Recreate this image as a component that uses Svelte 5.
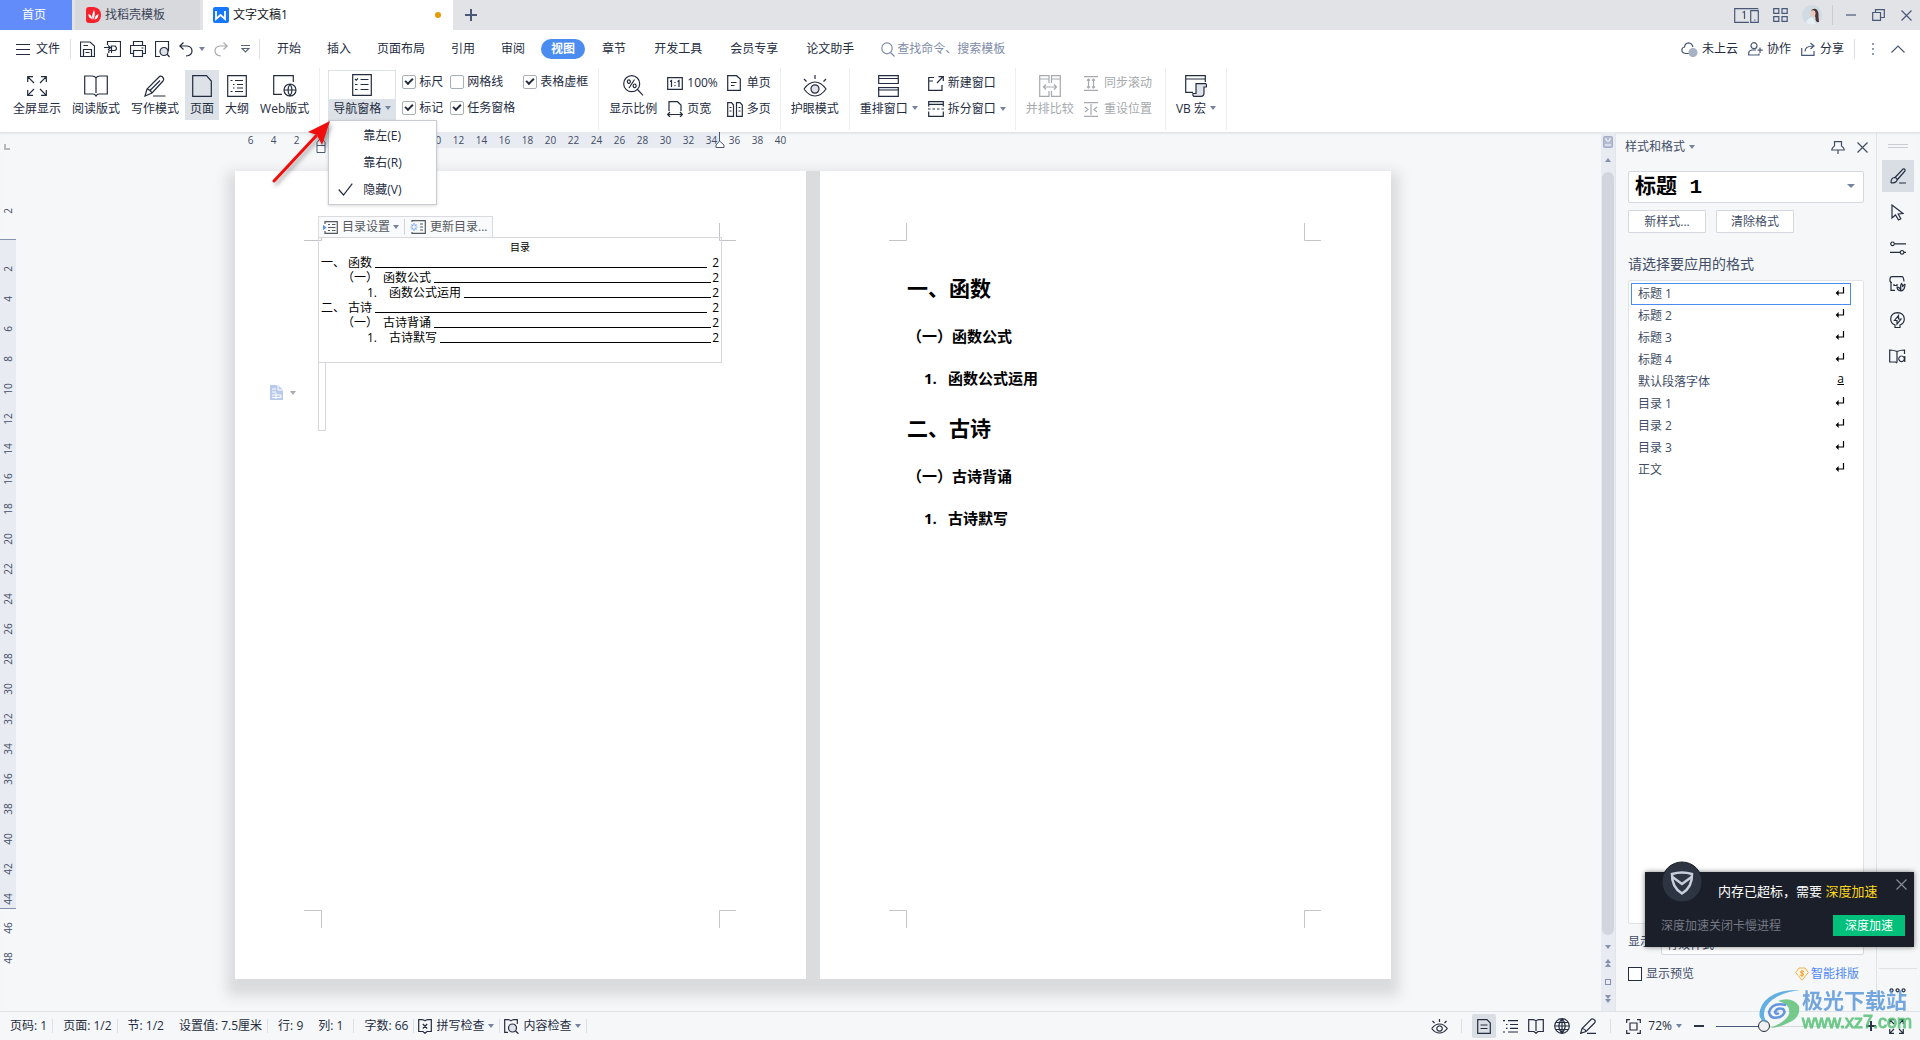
<script lang="ts">
  type Icon = { w: number; h: number; d: string; fill?: string; tone?: string };

  const icons: Record<string, Icon> = {
    burger: { w: 14, h: 12, d: 'M0 1.5H14M0 6.5H14M0 11.5H14' },
    save: { w: 15, h: 16, d: 'M.5 1H10L14.5 5V15.5H.5ZM3.5 15V8.5H11.5V15M3.5 4.5H8M5.5 11.5H9.5' },
    exportPdf: { w: 17, h: 16, d: 'M3.5 4V.5H16.5V15.5H3.5V12.5M0 6.5H6M4 4.5L6.5 6.5L4 9M7.5 12V5H11Q14 7.5 11 9.5H6Q4 10 5 12' },
    print: { w: 16, h: 16, d: 'M3.5 4.5V.5H12.5V4.5M3.5 12.5H.5V4.5H15.5V12.5H12.5M3.5 9.5H12.5V15.5H3.5ZM11.5 7H13.5' },
    preview: { w: 15, h: 17, d: 'M5 15.5H.5V.5H13.5V10M12 13L14.5 16', fill: 'M9 6.5A4 4 0 1 0 9 14.5A4 4 0 1 0 9 6.5Z' },
    undo: { w: 14, h: 15, d: 'M4.5 .5L.8 4L4.5 7.5M1 4H8Q13 4.5 13 9Q13 13.5 7 14' },
    redo: { w: 14, h: 15, d: 'M9.5 .5L13.2 4L9.5 7.5M13 4H6Q1 4.5 1 9Q1 13.5 7 14' },
    more: { w: 9, h: 8, d: 'M0 .5H9M1 3.5H8L4.5 7Z' },
    search: { w: 14, h: 15, d: 'M6 .8A5.2 5.5 0 1 0 6 11.8A5.2 5.5 0 1 0 6 .8M9.5 10.5L13.5 14.5' },
    cloud: { w: 17, h: 15, d: 'M8 11.5H4.5Q.8 11 .8 8Q1 5.5 3.5 5Q4 1 7.5 .8Q11 1 12 5', fill: 'M12 6.5A4 4 0 1 0 12 14.5A4 4 0 1 0 12 6.5', tone: '#a9b1c5' },
    people: { w: 15, h: 14, d: 'M6 .7A3 3 0 1 0 6 6.7A3 3 0 1 0 6 .7M8 8H4Q.7 8.5 .7 11V13H11V11.5M12 5.5V11M9.5 8.2H14.8' },
    share: { w: 15, h: 14, d: 'M.7 6V13.3H13V9M4 9.5Q4 4 12 4M9.5 1L13 4L9.5 7' },
    dots: { w: 4, h: 14, d: 'M2 1V3M2 6V8M2 11V13' },
    up: { w: 14, h: 8, d: 'M.5 7.5L7 1L13.5 7.5' },
    dual: { w: 25, h: 15, d: 'M15 14.3H.7V.7H24.3M16.7 2.7H24.3V14.3H16.7ZM20 12H21.5M8.5 4.5L10.5 3.5V11' },
    apps: { w: 15, h: 14, d: 'M.7.7H5.8V5.3H.7ZM9 .7H14.2V5.3H9ZM.7 8.7H5.8V13.3H.7ZM9 8.7H14.2V13.3H9Z' },
    minimize: { w: 10, h: 12, d: 'M0 6H10' },
    restore: { w: 13, h: 12, d: 'M.7 3.5H8.5V11.3H.7ZM3.5 3V.7H12.3V8.5H9' },
    close: { w: 11, h: 11, d: 'M.5.5L10.5 10.5M10.5.5L.5 10.5' },
    fullscreen: { w: 20, h: 20, d: 'M.7 6V.7H6M.7.7L7 7M14 .7H19.3V6M19.3.7L13 7M.7 14V19.3H6M.7 19.3L7 13M19.3 14V19.3H14M19.3 19.3L13 13' },
    book: { w: 24, h: 22, d: 'M12 3V18M12 3Q11 1 8 1H.7V19H9Q11 19 12 21Q13 19 15 19H23.3V1H16Q13 1 12 3' },
    pen: { w: 22, h: 22, d: 'M9 21H21.5M1 21L3 14L15 2Q16.5.2 18.5 2Q20.5 4 19 6L8 18ZM3 14Q6.5 14.5 8 18M5.5 16L16 5.5' },
    page: { w: 20, h: 22, d: 'M.7.7H14.5L19.3 6V21.3H.7Z' },
    outline: { w: 20, h: 22, d: 'M.7.7H19.3V21.3H.7ZM3.5 5.5H5.5M3.5 16.5H5.5M8 5.5H16M10 9.5H16M6 9.5H7.5M10 13H16M6 13H7.5M8 16.5H16' },
    web: { w: 24, h: 22, d: 'M9 19.3H.7V.7H20.3V7M17 9A6 6 0 1 0 17 21A6 6 0 1 0 17 9Q13 15 17 21Q21 15 17 9M11 15H23' },
    nav: { w: 20, h: 22, d: 'M.7.7H19.3V21.3H.7ZM3 5L4.2 6.2L6 4.5M8.5 5.5H16.5M3 10.5H5.5M8.5 10.5H16.5M3 15.5H5.5M8.5 15.5H16.5' },
    zoom: { w: 21, h: 21, d: 'M8.7.7A8 8 0 1 0 8.7 16.7A8 8 0 1 0 8.7.7M14.5 14.5L20 20.3M11.5 4.5L6 13M5.8 4.8A1.5 1.8 0 1 0 5.9 4.8M11.6 9A1.5 1.8 0 1 0 11.7 9' },
    oneToOne: { w: 16, h: 13, d: 'M.7.7H15.3V12.3H.7ZM3 4.5L4.5 3.5V10M10.5 4.5L12 3.5V10M8 5V6M8 8V9' },
    pageWidth: { w: 16, h: 16, d: 'M2 10V.7H10.5L14 4V10M.7 13.5H15.3M3 11L.7 13.5L3 16M13 11L15.3 13.5L13 16' },
    single: { w: 14, h: 16, d: 'M.7.7H9.5L13.3 4V15.3H.7ZM4 7.5H9.5M4 10.5H7.5' },
    multi: { w: 16, h: 15, d: 'M.7.7H4.5L6.5 3V14.3H.7ZM9.5.7H13L15.3 3V14.3H9.5ZM2.5 5.5H4.5M2.5 9H4.5M11.5 5.5H13.5M11.5 9H13.5' },
    eyeCare: { w: 24, h: 22, d: 'M1 14Q6 7 12 7Q18 7 23 14Q18 21 12 21Q6 21 1 14M12 0V4M1 4L3.5 6.5M23 4L20.5 6.5', fill: 'M12 9.8A4 4.2 0 1 0 12 18.2A4 4.2 0 1 0 12 9.8Z' },
    arrange: { w: 21, h: 22, d: 'M.7.7H20.3V8.5H.7ZM.7 3.5H20.3M.7 12.5H20.3V21.3H.7Z', fill: 'M.7 12.5H20.3V15H.7Z' },
    newWindow: { w: 16, h: 15, d: 'M6 1.5H.7V14.3H14V9M.7 5H5M9 7L15 .7M10.5.7H15.3V5' },
    split: { w: 16, h: 16, d: 'M.7 5.5V.7H15.3V5.5M.7 3.3H15.3M.7 10.5V15.3H15.3V10.5M0 8H2.5M4.5 8H7M9 8H11.5M13.5 8H16' },
    compare: { w: 22, h: 22, d: 'M10 8V.7H.7V21.3H10V16M12.5 8V.7H21.3V21.3H12.5V16M.7 4H10M12.5 4H21.3M5 12H17M7 9.5L4.5 12L7 14.5M15 9.5L17.5 12L15 14.5' },
    syncScroll: { w: 14, h: 15, d: 'M0 .7H14M0 14.3H14M4.5 3V12M9.5 3V12M3 4.5L4.5 3L6 4.5M3 10.5L4.5 12L6 10.5M8 4.5L9.5 3L11 4.5M8 10.5L9.5 12L11 10.5' },
    resetPos: { w: 14, h: 15, d: 'M0 .7H14M0 14.3H14M7 2V13M1 5L4 7.5L1 10M13 5L10 7.5L13 10' },
    macro: { w: 22, h: 22, d: 'M8 17.3H.7V.7H20.3V7M.7 4H20.3', fill: 'M11 8.7H20.5Q22 9 21.3 12H19V18Q19 21.3 16 21.3H9Q7.5 21 8 18.5H11Z' },
    tocSet: { w: 15, h: 13, d: 'M2 3V.7H14.3V12.3H2V10M5 3.5H7M9 3.5H12.5M5 6.5H12.5M5 9.5H7M9 9.5H12.5', fill: 'M.5 5L2.5 6.5L.5 8Z', tone: '#5b8def' },
    tocUpdate: { w: 16, h: 14, d: 'M2 2V.7H15.3V13.3H2V12M10 4H13M10 7H13M10 10H13', fill: 'M4 3V5.5M4 8.5V11M.5 7H2.5M5.5 7H7.5M1.5 4.5L2.8 5.8M5.2 8.2L6.5 9.5M6.5 4.5L5.2 5.8M2.8 8.2L1.5 9.5', tone: '#7aa5f3' },
    pin: { w: 14, h: 13, d: 'M3.5.7H10.5V5Q13 6.5 13.3 9H.7Q1 6.5 3.5 5ZM7 9V13' },
    enter: { w: 10, h: 9, d: 'M8.500 0V6H1M3 4.500L1.500 6L3 7.500Z' },
    brush: { w: 16, h: 16, d: 'M1 15Q1 9.5 4.5 9.5Q7.5 9.8 7 12.5Q6 15 1 15M5 9.5L13 1Q15.5.5 15 3L7.5 11.5M9 15H16' },
    cursor: { w: 13, h: 17, d: 'M1 1V14L4.5 11L7.5 16L9.8 14.8L7.2 10L12 9.5Z' },
    sliders: { w: 16, h: 14, d: 'M2.5 1A1.8 1.8 0 1 0 2.6 1M5 2.8H16M12 9.5A1.8 1.8 0 1 0 12.1 9.5M0 11.3H10M14 11.3H16' },
    shop: { w: 17, h: 16, d: 'M2 7V14.3H6M15 5.5Q14.5.7 13 .7H3Q1 .7 1 3Q.5 6.5 3 6.5M5 8V9.500H8V8', fill: 'M16 8Q16 14.5 12 15Q8 14.5 8 11Q11 11 12 15Q11 9.5 12.500 7.500Q14 9 13.500 11Q14.500 8.500 16 8' },
    bulb: { w: 15, h: 17, d: 'M5 13Q.7 11.5.7 7Q1 1 7.5.7Q14 1 14.3 7Q14.3 11.5 10 13V15.5H5ZM8.5 3.5L4.5 8.5H7V12L11 7H8.5Z' },
    lookup: { w: 17, h: 15, d: 'M8 2.500V13.500M8 2.500Q5 1 .7 1V13H6.500L8 14M8 2.500Q11 1 15.5 1V5M12.5 7A2.8 2.8 0 1 0 12.6 7M15.800 7V13' },
    spell: { w: 14, h: 15, d: 'M7 2Q6 .7 4 .7H.7V12.5H5L7 14.3L9 12.5H13.3V.7H10Q8 .7 7 2M4.8 5L9.2 9.5M9.2 5L4.8 9.5' },
    content: { w: 15, h: 15, d: 'M7 2Q6 .7 4 .7H.7V13.3H4M7 2Q8 .7 10 .7H13.3V5M11.5 12L14.5 14.8', fill: 'M8.5 5A4 4 0 1 0 8.5 13A4 4 0 1 0 8.5 5Z' },
    eye: { w: 17, h: 15, d: 'M.7 9.5Q4 5 8.5 5Q13 5 16.3 9.5Q13 14 8.5 14Q4 14 .7 9.5M8.5 6.8A2.7 2.7 0 1 0 8.6 6.8M8.5 0V3M1.5 2L3.5 4M15.5 2L13.5 4' },
    doc: { w: 14, h: 15, d: 'M.7.7H10L13.3 4V14.3H.7ZM3.5 6H10.5M3.5 9.5H10.5' },
    lines: { w: 15, h: 13, d: 'M0 .7H2M5 .7H15M3 4.5H4.5M7 4.5H15M3 8.3H4.5M7 8.3H15M0 12H2M5 12H15' },
    smallBook: { w: 16, h: 15, d: 'M8 2V12M8 2Q7 .7 5 .7H.7V12.5H6L8 14.3L10 12.5H15.3V.7H11Q9 .7 8 2' },
    globe: { w: 16, h: 16, d: 'M8 .7A7.3 7.3 0 1 0 8 15.3A7.3 7.3 0 1 0 8 .7Q1.5 8 8 15.3Q14.5 8 8 .7M.7 8H15.3M8 .7V15.3M2 4.5H14M2 11.5H14' },
    smallPen: { w: 17, h: 16, d: 'M7 15.3H16M.7 15.3L2 10.5L11.5 1Q13 .2 15 2.5Q15.5 4 14.5 5L6 13.5ZM2 10.5Q5.5 11 6 13.5' },
    fit: { w: 15, h: 15, d: 'M.7 4V.7H4M11 .7H14.3V4M14.3 11V14.3H11M4 14.3H.7V11M4 4H11V11H4Z' },
    expand: { w: 15, h: 15, d: 'M.7 5V.7H5M.7.7L5 5M10 .7H14.3V5M14.3.7L10 5M.7 10V14.3H5M.7 14.3L5 10M14.3 10V14.3H10M14.3 14.3L10 10' },
    moreDots: { w: 17, h: 5, d: 'M2.5.8A1.5 1.5 0 1 0 2.6.8M8.5.8A1.5 1.5 0 1 0 8.6.8M14.5.8A1.5 1.5 0 1 0 14.6.8' },
    tick: { w: 15, h: 13, d: 'M.7 6.5L5.5 12L14.3.7' }
  };

  const menuTabs = ['开始', '插入', '页面布局', '引用', '审阅', '视图', '章节', '开发工具', '会员专享', '论文助手'];

  const views = [
    { icon: 'fullscreen', label: '全屏显示' },
    { icon: 'book', label: '阅读版式' },
    { icon: 'pen', label: '写作模式' },
    { icon: 'page', label: '页面', active: true },
    { icon: 'outline', label: '大纲' },
    { icon: 'web', label: 'Web版式' }
  ];

  let shows = $state([
    { label: '标尺', on: true },
    { label: '网格线', on: false },
    { label: '表格虚框', on: true },
    { label: '标记', on: true },
    { label: '任务窗格', on: true }
  ]);

  let navPosition = $state('隐藏(V)');
  const navOptions = ['靠左(E)', '靠右(R)', '隐藏(V)'];

  const evens = (from: number, to: number) =>
    Array.from({ length: (to - from) / 2 + 1 }, (_, i) => from + i * 2);

  const toc = [
    { level: 1, mark: '一、', text: '函数' },
    { level: 2, mark: '（一）', text: '函数公式' },
    { level: 3, mark: '1.', text: '函数公式运用' },
    { level: 1, mark: '二、', text: '古诗' },
    { level: 2, mark: '（一）', text: '古诗背诵' },
    { level: 3, mark: '1.', text: '古诗默写' }
  ];

  const styles = ['标题 1', '标题 2', '标题 3', '标题 4', '默认段落字体', '目录 1', '目录 2', '目录 3', '正文'];
  let currentStyle = $state('标题 1');

  const tools = ['brush', 'cursor', 'sliders', 'shop', 'bulb', 'lookup'];

  let zoom = $state(33);
  let previewOn = $state(false);
</script>

{#snippet icon(name: string)}
  {@const i = icons[name]}
  <svg class="icon" width={i.w} height={i.h} viewBox="0 0 {i.w} {i.h}" aria-hidden="true">
    <path d={i.d} />
    {#if i.fill}
      <path d={i.fill} fill={i.tone ?? '#dfe3e9'} stroke={i.tone ?? 'currentColor'} />
    {/if}
  </svg>
{/snippet}

{#snippet cropMarks()}
  <svg class="crop" width="571" height="808" viewBox="0 0 571 808" aria-hidden="true">
    <path d="M69 69.5H86.5V52M501 69.5H484.5V52M69 739.5H86.5V757M501 739.5H484.5V757" />
  </svg>
{/snippet}

<div class="app">
  <header class="titlebar">
    <button class="home">首页</button>
    <button class="tab template">
      <svg width="15" height="16" viewBox="0 0 15 16" aria-hidden="true">
        <path d="M0 3Q0 0 3 0H8Q15 1 15 8Q15 15 8 16H3Q0 16 0 13Z" fill="#f5222d" />
        <path d="M7 13Q5 9 8 3Q10 7 7 13M6 12Q2 11 2.5 7Q6 8 6 12M8.5 12.5Q8.5 8.5 12.5 7Q12.5 12 8.5 12.5" fill="#fff" />
      </svg>
      找稻壳模板
    </button>
    <button class="tab current">
      <svg width="16" height="16" viewBox="0 0 16 16" aria-hidden="true">
        <rect width="16" height="16" rx="2" fill="#1677ff" />
        <path d="M3 4V12L7.5 8L12 12V4" fill="none" stroke="#fff" stroke-width="1.8" />
      </svg>
      文字文稿1
      <span class="unsaved"></span>
    </button>
    <button class="add" aria-label="新建">
      <svg width="14" height="14" viewBox="0 0 14 14" aria-hidden="true"><path d="M7 1V13M1 7H13" stroke="#4a5878" stroke-width="2" /></svg>
    </button>
    <div class="window-tools">
      <button aria-label="双屏">{@render icon('dual')}</button>
      <button aria-label="应用">{@render icon('apps')}</button>
      <button aria-label="账号">
        <svg width="20" height="20" viewBox="0 0 20 20" aria-hidden="true">
          <circle cx="10" cy="10" r="10" fill="#cfdbe1" />
          <path d="M9 7Q10 3 14 4Q17 6 16.5 12L17 17Q13 18 13.5 12Z" fill="#4b3436" />
          <ellipse cx="11" cy="8.5" rx="2.5" ry="3.2" fill="#e9c9bd" />
          <path d="M4 18Q6 12 11 12.5L14 19Q9 21 4 18" fill="#e6f0f4" />
        </svg>
      </button>
      <span class="rule"></span>
      <button aria-label="最小化">{@render icon('minimize')}</button>
      <button aria-label="还原">{@render icon('restore')}</button>
      <button aria-label="关闭">{@render icon('close')}</button>
    </div>
  </header>

  <nav class="menubar">
    <button class="file">{@render icon('burger')}文件</button>
    <span class="rule"></span>
    <div class="quick">
      <button aria-label="保存">{@render icon('save')}</button>
      <button aria-label="输出为PDF">{@render icon('exportPdf')}</button>
      <button aria-label="打印">{@render icon('print')}</button>
      <button aria-label="打印预览">{@render icon('preview')}</button>
      <button aria-label="撤销" class="undo">{@render icon('undo')}<i class="caret"></i></button>
      <button aria-label="恢复" disabled>{@render icon('redo')}</button>
      <button aria-label="更多" class="customize">{@render icon('more')}</button>
    </div>
    <span class="rule"></span>
    <div class="tabs">
      {#each menuTabs as tab}
        <button class:selected={tab === '视图'}>{tab}</button>
      {/each}
    </div>
    <label class="search">
      {@render icon('search')}
      <input type="text" placeholder="查找命令、搜索模板" aria-label="查找命令、搜索模板" />
    </label>
    <div class="share">
      <button>{@render icon('cloud')}未上云</button>
      <button>{@render icon('people')}协作</button>
      <button>{@render icon('share')}分享</button>
      <span class="rule"></span>
      <button class="dots" aria-label="更多">{@render icon('dots')}</button>
      <button class="fold" aria-label="收起功能区">{@render icon('up')}</button>
    </div>
  </nav>

  <section class="ribbon" aria-label="视图">
    {#each views as view}
      <button class="big" class:active={view.active}><span class="pic">{@render icon(view.icon)}</span>{view.label}</button>
    {/each}
    <span class="divider"></span>
    <div class="nav-pane">
      <button class="big open"><span class="pic">{@render icon('nav')}</span><span>导航窗格<i class="caret"></i></span></button>
      <div class="menu" role="menu">
        {#each navOptions as option}
          <button role="menuitem" onclick={() => (navPosition = option)}>
            <span class="mark">{#if navPosition === option}{@render icon('tick')}{/if}</span>
            {option}
          </button>
        {/each}
      </div>
    </div>
    <div class="checks">
      {#each shows as show}
        <label class="check"><input type="checkbox" bind:checked={show.on} />{show.label}</label>
      {/each}
    </div>
    <span class="divider"></span>
    <button class="big"><span class="pic">{@render icon('zoom')}</span>显示比例</button>
    <div class="stack">
      <button class="small"><span>{@render icon('oneToOne')}</span>100%</button>
      <button class="small"><span>{@render icon('pageWidth')}</span>页宽</button>
    </div>
    <div class="stack">
      <button class="small"><span>{@render icon('single')}</span>单页</button>
      <button class="small"><span>{@render icon('multi')}</span>多页</button>
    </div>
    <span class="divider"></span>
    <button class="big"><span class="pic">{@render icon('eyeCare')}</span>护眼模式</button>
    <span class="divider"></span>
    <button class="big"><span class="pic">{@render icon('arrange')}</span><span>重排窗口<i class="caret"></i></span></button>
    <div class="stack">
      <button class="small"><span>{@render icon('newWindow')}</span>新建窗口</button>
      <button class="small"><span>{@render icon('split')}</span>拆分窗口<i class="caret"></i></button>
    </div>
    <span class="divider"></span>
    <button class="big" disabled><span class="pic">{@render icon('compare')}</span>并排比较</button>
    <div class="stack roomy">
      <button class="small" disabled><span>{@render icon('syncScroll')}</span>同步滚动</button>
      <button class="small" disabled><span>{@render icon('resetPos')}</span>重设位置</button>
    </div>
    <span class="divider"></span>
    <button class="big"><span class="pic">{@render icon('macro')}</span><span>VB 宏<i class="caret"></i></span></button>
    <span class="divider"></span>

    <svg class="pointer" width="70" height="76" viewBox="0 0 70 76" aria-hidden="true">
      <path d="M4 62L46 17" stroke="#f20d0d" stroke-width="3" stroke-linecap="round" />
      <path d="M60 2L38 13L47 16L52 26Z" fill="#f20d0d" />
    </svg>
  </section>

  <main class="workspace">
    <div class="v-ruler">
      <div class="v-top"><i class="corner"></i><span>2</span></div>
      <div class="v-body">
        {#each evens(2, 44) as n}<span>{n}</span>{/each}
      </div>
      <div class="v-rest">
        {#each evens(46, 48) as n}<span>{n}</span>{/each}
      </div>
    </div>

    <div class="canvas">
      <div class="sheet-area">
        <div class="h-ruler">
          <div class="h-left"><span>6</span><span>4</span><span>2</span></div>
          <div class="h-body">
            {#each evens(10, 34) as n}<span>{n}</span>{/each}
            <svg class="indent first" width="10" height="18" viewBox="0 0 10 18" aria-hidden="true">
              <path d="M1 6.5L5 1.5L9 6.5V16.5H1ZM1 9.5H9" />
            </svg>
            <svg class="indent last" width="10" height="18" viewBox="0 0 10 18" aria-hidden="true">
              <path d="M4.5 0V9L1 13V15.5H9V13L4.5 9" />
            </svg>
          </div>
          <div class="h-right">
            {#each evens(36, 40) as n}<span>{n}</span>{/each}
          </div>
        </div>

        <div class="pages">
          <article class="page first">
            {@render cropMarks()}
            <div class="toc-tools">
              <button>{@render icon('tocSet')}目录设置<i class="caret"></i></button>
              <button>{@render icon('tocUpdate')}更新目录...</button>
            </div>
            <div class="toc">
              <p class="toc-title">目录</p>
              {#each toc as row}
                <p class="row level-{row.level}">
                  <span class="num">{row.mark}</span>
                  <span>{row.text}</span>
                  <span class="leader"></span>
                  <span>2</span>
                </p>
              {/each}
            </div>
            <div class="toc-tail"></div>
            <button class="paste" aria-label="段落选项">
              <svg width="13" height="15" viewBox="0 0 13 15" aria-hidden="true">
                <path d="M0 0H8L13 5V15H0Z" fill="#b9cbea" />
                <path d="M8 0V5H13M2 4H6M2 7H6M2 10H11V12.5H2M6 8V14" fill="none" stroke="#fff" />
              </svg>
              <i class="caret"></i>
            </button>
          </article>

          <article class="page second">
            {@render cropMarks()}
            <h1>一、函数</h1>
            <h2>（一）函数公式</h2>
            <h3><span>1.</span>函数公式运用</h3>
            <h1>二、古诗</h1>
            <h2>（一）古诗背诵</h2>
            <h3><span>1.</span>古诗默写</h3>
          </article>
        </div>
      </div>
    </div>

    <div class="scrollbar">
      <svg class="book-toggle" width="10" height="12" viewBox="0 0 10 12" aria-hidden="true">
        <rect x=".5" y=".5" width="9" height="11" rx="1" fill="#b3bcd0" stroke="#a4afc6" />
        <path d="M3 2V4L5 5.5L7 4V2M2 9H8" fill="none" stroke="#fff" />
      </svg>
      <svg class="arrow" width="6" height="4" viewBox="0 0 6 4" aria-hidden="true"><path d="M0 4L3 0L6 4Z" /></svg>
      <div class="thumb"></div>
      <svg class="arrow" width="6" height="4" viewBox="0 0 6 4" aria-hidden="true"><path d="M0 0L3 4L6 0Z" /></svg>
      <svg class="arrow" width="6" height="8" viewBox="0 0 6 8" aria-hidden="true"><path d="M0 4L3 0L6 4ZM0 8L3 4L6 8Z" /></svg>
      <span class="browse"></span>
      <svg class="arrow" width="6" height="8" viewBox="0 0 6 8" aria-hidden="true"><path d="M0 0L3 4L6 0ZM0 4L3 8L6 4Z" /></svg>
    </div>

    <aside class="panel">
      <div class="panel-head">
        <button>样式和格式<i class="caret"></i></button>
        <span class="grow"></span>
        <button aria-label="固定">{@render icon('pin')}</button>
        <button aria-label="关闭">{@render icon('close')}</button>
      </div>
      <div class="select-box current-style">
        <select bind:value={currentStyle} aria-label="当前样式">
          {#each styles as style}<option>{style}</option>{/each}
        </select>
        <i class="caret"></i>
      </div>
      <div class="style-actions">
        <button>新样式...</button>
        <button>清除格式</button>
      </div>
      <p class="hint">请选择要应用的格式</p>
      <ul class="style-list">
        {#each styles as style}
          <li>
            <button class:selected={style === currentStyle} onclick={() => (currentStyle = style)}>
              {style}
              {#if style === '默认段落字体'}<u>a</u>{:else}{@render icon('enter')}{/if}
            </button>
          </li>
        {/each}
      </ul>
      <div class="show-row">
        <label for="show-kind">显示:</label>
        <div class="select-box">
          <select id="show-kind"><option>有效样式</option></select>
        </div>
      </div>
      <div class="preview-row">
        <label><input type="checkbox" bind:checked={previewOn} />显示预览</label>
        <a href="#smart">
          <svg width="14" height="14" viewBox="0 0 14 14" aria-hidden="true">
            <path d="M4 1H10L13.3 5.5L7 13.3L.7 5.5Z" fill="#fff6e5" stroke="#f2b04c" />
            <path d="M9 4.5Q5 3.5 5.5 5.5Q9.5 6.5 8.5 8Q7 9.5 5 8M7 3V10" fill="none" stroke="#f2a02c" />
          </svg>智能排版</a>
      </div>
    </aside>

    <aside class="toolstrip">
      <span class="grip"></span>
      {#each tools as tool}
        <button class:selected={tool === 'brush'} aria-label={tool}>{@render icon(tool)}</button>
      {/each}
      <span class="grow"></span>
      <div class="strip-more"><button aria-label="更多">{@render icon('moreDots')}</button></div>
    </aside>
  </main>

  <footer class="status">
    <span>页码: 1</span>
    <span class="rule"></span>
    <span>页面: 1/2</span>
    <span class="rule"></span>
    <span>节: 1/2</span>
    <span class="after">设置值: 7.5厘米</span>
    <span class="rule"></span>
    <span>行: 9</span>
    <span class="after column">列: 1</span>
    <span class="rule"></span>
    <span>字数: 66</span>
    <span class="rule"></span>
    <button class="review">{@render icon('spell')}拼写检查<i class="caret"></i></button>
    <span class="rule"></span>
    <button class="review">{@render icon('content')}内容检查<i class="caret"></i></button>
    <span class="rule"></span>
    <span class="grow"></span>
    <div class="status-views">
      <button aria-label="护眼">{@render icon('eye')}</button>
      <span class="rule"></span>
      <button class="selected" aria-label="页面">{@render icon('doc')}</button>
      <button aria-label="大纲">{@render icon('lines')}</button>
      <button aria-label="阅读">{@render icon('smallBook')}</button>
      <button aria-label="Web">{@render icon('globe')}</button>
      <button aria-label="写作">{@render icon('smallPen')}</button>
      <span class="rule"></span>
      <button aria-label="最佳比例">{@render icon('fit')}</button>
    </div>
    <button class="percent">72%<i class="caret"></i></button>
    <button class="step" aria-label="缩小">
      <svg width="10" height="10" viewBox="0 0 10 10" aria-hidden="true"><path d="M0 5H10" stroke="#2b3346" stroke-width="2" /></svg>
    </button>
    <input class="slider" type="range" min="0" max="100" bind:value={zoom} aria-label="缩放" />
    <button class="step" aria-label="放大">
      <svg width="10" height="10" viewBox="0 0 10 10" aria-hidden="true"><path d="M0 5H10M5 0V10" stroke="#2b3346" stroke-width="2" /></svg>
    </button>
    <button class="expand" aria-label="全屏">{@render icon('expand')}</button>
  </footer>

  <div class="toast" role="alert">
    <svg class="shield" width="42" height="42" viewBox="0 0 42 42" aria-hidden="true">
      <circle cx="21" cy="21" r="20" fill="#2d3442" stroke="#1b202b" />
      <path d="M11 13Q21 10 31 13Q31.5 26 21 32.5Q10.5 26 11 13ZM11.5 16L21 23L30.5 16" fill="none" stroke="#c9cede" stroke-width="2.5" />
    </svg>
    <button class="dismiss" aria-label="关闭">{@render icon('close')}</button>
    <p class="headline">内存已超标，需要 <b>深度加速</b></p>
    <div class="toast-row">
      <span>深度加速关闭卡慢进程</span>
      <button>深度加速</button>
    </div>
  </div>

  <div class="watermark">
    <svg width="44" height="42" viewBox="0 0 44 42" aria-hidden="true">
      <path d="M42 1Q14 0 4 16Q-3 30 9 34Q1 22 14 11Q25 3 42 1" fill="#4aa3dd" />
      <path d="M20 12Q34 7 41 17Q43 29 30 34Q20 39 12 39Q28 33 31 25Q33 15 20 12" fill="#5fc27a" />
      <path d="M28 16Q14 13 11 23Q12 31 22 28Q29 24 25 20Q19 18 17 23Q18 26 21 24" fill="none" stroke="#4a86d8" stroke-width="2.5" />
    </svg>
    <div>
      <strong>极光下载站</strong>
      <span>www.xz7.com</span>
    </div>
  </div>
</div>

<style>
  :global(body) {
    margin: 0;
    overflow: hidden;
  }

  .app {
    --ink: #242c3f;
    --soft: #414d66;
    --line: #dcdfe4;
    --canvas: #f6f7f9;
    --blue: #4a8cf0;
    position: relative;
    display: flex;
    flex-direction: column;
    height: 100vh;
    font: 12px/16px 'Open Sans', 'Noto Sans CJK SC', sans-serif;
    color: var(--ink);
    background: #fff;
  }

  button {
    display: flex;
    align-items: center;
    margin: 0;
    padding: 0;
    border: 0;
    background: none;
    font: inherit;
    color: inherit;
    white-space: nowrap;
    cursor: pointer;
  }

  button:disabled {
    color: #a6a9ae;
    cursor: default;
  }

  p, h1, h2, h3, ul {
    margin: 0;
    padding: 0;
    list-style: none;
  }

  .icon {
    flex: none;
    fill: none;
    stroke: currentColor;
    stroke-width: 1.2;
  }

  .caret {
    display: inline-block;
    flex: none;
    border: 3px solid transparent;
    border-top: 4px solid #7583a0;
    border-bottom: 0;
    margin-left: 4px;
    vertical-align: 3px;
  }

  .rule {
    flex: none;
    width: 1px;
    height: 20px;
    background: var(--line);
  }

  .grow {
    flex: 1;
  }

  /* title bar */
  .titlebar {
    display: flex;
    gap: 3px;
    height: 30px;
    background: #e1e3e7;
  }

  .home {
    width: 72px;
    padding-right: 4px;
    justify-content: center;
    background: #638cfb;
    color: #fff;
  }

  .tab {
    gap: 4px;
    padding: 0 10px;
    box-sizing: border-box;
  }

  .template {
    width: 125px;
    padding-left: 11px;
    background: #d7d9dd;
    color: #3b4354;
  }

  .current {
    width: 250px;
    background: #fff;
    color: #111722;
  }

  .unsaved {
    width: 6px;
    height: 6px;
    margin-left: auto;
    margin-right: 2px;
    border-radius: 50%;
    background: #e69a05;
  }

  .add {
    padding: 0 8px;
  }

  .window-tools {
    display: flex;
    align-items: center;
    gap: 14px;
    margin-left: auto;
    padding-right: 8px;
    color: #4a5878;
  }

  .window-tools .rule {
    background: #c9ccd2;
    margin: 0 -3px 0 -4px;
  }

  .window-tools .rule ~ button {
    margin-left: 2px;
  }

  /* menu row */
  .menubar {
    display: flex;
    align-items: center;
    height: 38px;
    padding-left: 16px;
  }

  .file {
    gap: 6px;
    margin-right: 10px;
  }

  .quick {
    display: flex;
    align-items: center;
    gap: 9px;
    padding: 0 9px;
  }

  .undo .caret {
    margin-left: 6px;
  }

  .customize {
    margin-left: 4px;
    color: #5b6475;
  }

  .tabs {
    display: flex;
    padding-left: 9px;
    gap: 10px;
  }

  .tabs button {
    height: 20px;
    padding: 0 8px;
  }

  .tabs .selected {
    padding: 0 10px;
    margin: 0 -2px;
    border-radius: 10px;
    background: var(--blue);
    color: #fff;
    font-weight: bold;
  }

  .tabs .selected ~ button {
    padding: 0 9px;
  }

  .search {
    display: flex;
    align-items: center;
    gap: 2px;
    margin-left: 18px;
    color: #808ca8;
  }

  .search input {
    width: 140px;
    padding: 0;
    border: 0;
    outline: none;
    font: inherit;
  }

  .search input::placeholder {
    color: #808ca8;
  }

  .share {
    display: flex;
    align-items: center;
    gap: 10px;
    margin-left: auto;
    padding-right: 15px;
  }

  .share button {
    gap: 4px;
  }

  .share .icon {
    color: #4a5878;
  }

  .share .dots {
    margin: 0 6px;
  }

  /* ribbon */
  .ribbon {
    position: relative;
    z-index: 2;
    display: flex;
    gap: 1px;
    height: 64px;
    padding-left: 8px;
  }

  .big {
    flex-direction: column;
    height: 50px;
    margin-top: 2px;
    padding: 0 5px;
  }

  .big .pic {
    display: flex;
    align-items: center;
    justify-content: center;
    height: 31px;
  }

  .active {
    background: #dce2e8;
  }

  .open {
    background: #dce2e8;
    padding: 0;
    width: 68px;
  }

  .open .pic {
    width: 66px;
    height: 28px;
    margin: 1px 0 2px;
    background: #fff;
  }

  .divider {
    flex: none;
    width: 1px;
    height: 62px;
    margin: 0 4px;
    background: #eceef1;
  }

  .nav-pane {
    position: relative;
    margin-left: 3px;
  }

  .menu {
    position: absolute;
    top: 52px;
    left: 0;
    width: 107px;
    padding: 1px 0;
    border: 1px solid #c8cbd1;
    background: #fff;
    box-shadow: 0 1px 3px rgba(0, 0, 0, 0.15);
  }

  .menu button {
    width: 100%;
    height: 27px;
  }

  .mark {
    display: flex;
    width: 25px;
    padding-left: 9px;
  }

  .checks {
    display: grid;
    grid-template-columns: 48px 73px auto;
    grid-template-rows: 26px 26px;
    height: 52px;
    padding: 1px 5px 0;
  }

  .check {
    display: flex;
    align-items: center;
    gap: 3px;
  }

  input[type='checkbox'] {
    appearance: none;
    box-sizing: border-box;
    display: grid;
    place-items: center;
    width: 14px;
    height: 14px;
    margin: 0;
    border: 1px solid #a9afb9;
    border-radius: 2px;
    background: #fff;
  }

  input[type='checkbox']:checked::after {
    content: '';
    width: 6px;
    height: 3px;
    margin-bottom: 3px;
    border-left: 2px solid #242c3f;
    border-bottom: 2px solid #242c3f;
    transform: rotate(-45deg);
  }

  .stack {
    display: flex;
    flex-direction: column;
    padding-top: 2px;
  }

  .roomy {
    margin-right: 4px;
  }

  .small {
    height: 26px;
    padding: 0 4px;
  }

  .small span {
    width: 20px;
    display: flex;
  }

  .pointer {
    position: absolute;
    top: 51px;
    left: 270px;
    fill: none;
    filter: drop-shadow(2px 3px 2px rgba(0, 0, 0, 0.35));
  }

  /* workspace */
  .workspace {
    flex: 1;
    display: flex;
    min-height: 0;
    background: var(--canvas);
    box-shadow: inset 0 3px 3px -2px #d5d8dd;
  }

  .v-ruler {
    display: flex;
    flex-direction: column;
    width: 16px;
    font-size: 10px;
    color: var(--soft);
  }

  .v-ruler span {
    display: flex;
    flex: none;
    align-items: center;
    justify-content: center;
    width: 16px;
    height: 30px;
    transform: rotate(-90deg);
  }

  .v-top {
    display: flex;
    flex-direction: column;
    justify-content: space-between;
    box-sizing: border-box;
    height: 107px;
    padding: 12px 0 13px;
  }

  .corner {
    width: 4px;
    height: 4px;
    margin-left: 4px;
    border-left: 2px solid #b3b7be;
    border-bottom: 2px solid #b3b7be;
  }

  .v-body {
    box-sizing: border-box;
    height: 670px;
    padding-top: 14px;
    border-top: 1px solid #8593ae;
    border-bottom: 1px solid #8593ae;
    background: #e8ebf1;
  }

  .v-rest {
    padding-top: 4px;
  }

  .canvas {
    flex: 1;
    display: flex;
    justify-content: center;
    min-width: 0;
    overflow: hidden;
    padding-left: 9px;
  }

  .h-ruler {
    display: flex;
    height: 16px;
    font-size: 10px;
    color: var(--soft);
  }

  .h-ruler span {
    flex: none;
    width: 23px;
    text-align: center;
  }

  .h-left {
    display: flex;
    justify-content: flex-end;
    box-sizing: border-box;
    width: 85px;
    padding-right: 12px;
  }

  .h-body {
    position: relative;
    display: flex;
    box-sizing: border-box;
    width: 399px;
    padding-left: 104px;
    background: #e8ebf1;
  }

  .h-right {
    display: flex;
    padding-left: 4px;
  }

  .indent {
    position: absolute;
    fill: #fff;
    stroke: #4a5878;
  }

  .indent.first {
    top: 4px;
    left: -4px;
  }

  .indent.last {
    top: 0;
    right: -6px;
  }

  .pages {
    display: flex;
    gap: 14px;
    margin-top: 23px;
    background: #dadcde;
    box-shadow: 0 9px 12px 8px #d9dbdd;
  }

  .page {
    position: relative;
    box-sizing: border-box;
    width: 571px;
    height: 808px;
    background: #fff;
    color: #000;
  }

  .page.first {
    padding: 45px 84px 0 83px;
  }

  .page.second {
    padding: 101px 84px 0 87px;
  }

  .crop {
    position: absolute;
    inset: 0;
    fill: none;
    stroke: #c3c5c8;
  }

  .toc-tools {
    position: relative;
    display: flex;
    width: fit-content;
    height: 20px;
    padding: 0 5px 0 4px;
    border: 1px solid #d9dbde;
    border-bottom: 0;
    background: #f9fafb;
    color: #55585e;
  }

  .toc-tools button {
    gap: 4px;
  }

  .toc-tools .caret {
    margin-left: -1px;
  }

  .toc-tools button + button {
    margin: 2px 0 2px 5px;
    padding-left: 5px;
    border-left: 1px solid #d0d2d6;
  }

  .toc {
    position: relative;
    box-sizing: border-box;
    height: 126px;
    padding: 1px 2px 0;
    border: 1px solid #d5d7da;
  }

  .toc-title {
    font-size: 10px;
    text-align: center;
  }

  .row {
    display: flex;
    height: 15px;
    line-height: 15px;
  }

  .num {
    flex: none;
    width: 27px;
  }

  .level-2 {
    padding-left: 21px;
  }

  .level-2 .num {
    width: 41px;
  }

  .level-3 {
    padding-left: 46px;
  }

  .level-3 .num {
    width: 22px;
  }

  .leader {
    flex: 1;
    height: 12px;
    margin: 0 1px 0 3px;
    border-bottom: 1px solid #000;
  }

  .level-1 .leader {
    margin-right: 5px;
  }

  .toc-tail {
    box-sizing: border-box;
    width: 8px;
    height: 68px;
    border: 1px solid #d5d7da;
    border-top: 0;
  }

  .paste {
    position: absolute;
    top: 214px;
    left: 35px;
    gap: 3px;
  }

  .paste .caret {
    border-top-color: #a7abb3;
  }

  h1 {
    font-size: 21px;
    line-height: 32px;
  }

  h2, h3 {
    margin-top: 20px;
    font-size: 15px;
    line-height: 24px;
  }

  h2 + h3 {
    margin-top: 18px;
  }

  h3 {
    display: flex;
    padding-left: 17px;
  }

  h3 span {
    width: 24px;
  }

  h3 + h1 {
    margin-top: 22px;
  }

  .scrollbar {
    display: flex;
    flex-direction: column;
    align-items: center;
    width: 14px;
    padding: 4px 0 8px;
    box-sizing: border-box;
    background: #e9ebf2;
  }

  .arrow {
    flex: none;
    fill: #8591ad;
    margin-top: 10px;
  }

  .thumb {
    flex: 1;
    width: 12px;
    margin-top: 10px;
    border-radius: 6px;
    background: #d2d5dd;
  }

  .browse {
    width: 4px;
    height: 4px;
    margin-top: 12px;
    border: 1px solid #8591ad;
  }

  /* styles panel */
  .panel {
    display: flex;
    flex-direction: column;
    box-sizing: border-box;
    width: 261px;
    padding: 0 12px 27px 12px;
    border-left: 1px solid #e3e5e9;
    color: var(--soft);
  }

  .panel-head {
    display: flex;
    align-items: center;
    gap: 12px;
    height: 30px;
    margin: 0 -4px 9px -3px;
  }

  .select-box {
    position: relative;
    display: flex;
    flex: 1;
    border: 1px solid #d5d9df;
    border-radius: 2px;
    background: #fff;
  }

  .current-style {
    flex: none;
    height: 30px;
  }

  .select-box .caret {
    position: absolute;
    right: 8px;
    top: 12px;
    border-width: 4px 4px 0;
  }

  select {
    appearance: none;
    flex: 1;
    padding: 0 4px;
    border: 0;
    outline: none;
    background: transparent;
    font: inherit;
    color: inherit;
  }

  .current-style select {
    padding: 2px 4px 0 6px;
    font: bold 21px/28px 'Liberation Mono', 'Noto Sans CJK SC', monospace;
    color: #000;
  }

  .style-actions {
    display: flex;
    gap: 10px;
    margin-top: 7px;
  }

  .style-actions button {
    justify-content: center;
    box-sizing: border-box;
    width: 78px;
    height: 23px;
    border: 1px solid #d5d9df;
    border-radius: 1px;
    background: #fff;
  }

  .hint {
    margin: 21px 0 6px;
    font-size: 14px;
    line-height: 20px;
  }

  .style-list {
    flex: 1;
    padding: 2px;
    border: 1px solid #dfe2e7;
    border-radius: 2px;
    background: #fff;
  }

  .style-list button {
    justify-content: space-between;
    box-sizing: border-box;
    width: 220px;
    height: 22px;
    padding: 0 5px 0 6px;
    border: 1px solid transparent;
  }

  .style-list .selected {
    border-color: var(--blue);
  }

  .style-list .icon,
  .style-list u {
    margin-bottom: 6px;
    color: #000;
  }

  .style-list u {
    margin-right: 1px;
  }

  .show-row {
    display: flex;
    gap: 4px;
    height: 21px;
    margin-top: 10px;
  }

  .show-row label {
    flex: none;
    width: 29px;
  }

  .preview-row {
    display: flex;
    align-items: center;
    justify-content: space-between;
    height: 20px;
    margin-top: 9px;
    padding-right: 5px;
  }

  .preview-row label,
  .preview-row a {
    display: flex;
    align-items: center;
    gap: 4px;
  }

  .preview-row a {
    gap: 2px;
    color: #4d86f7;
    text-decoration: none;
  }

  .preview-row input {
    border-color: #242c3f;
    border-radius: 0;
  }

  .toolstrip {
    display: flex;
    flex-direction: column;
    align-items: center;
    gap: 4px;
    box-sizing: border-box;
    width: 44px;
    padding-top: 12px;
    padding-right: 2px;
    border-left: 1px solid #e0e2e6;
  }

  .grip {
    width: 20px;
    height: 2px;
    margin-bottom: 8px;
    border-top: 1px solid #c9ccd2;
    border-bottom: 1px solid #c9ccd2;
  }

  .toolstrip > button {
    justify-content: center;
    width: 32px;
    height: 32px;
    border-radius: 1px;
  }

  .toolstrip .selected {
    background: #d9dee5;
  }

  .strip-more {
    display: flex;
    justify-content: center;
    box-sizing: border-box;
    width: 38px;
    height: 43px;
    border-top: 1px solid #dfe1e5;
  }

  /* status bar */
  .status {
    display: flex;
    align-items: center;
    height: 28px;
    padding: 0 16px 0 0;
    border-top: 1px solid #dfe2e6;
    background: var(--canvas);
  }

  .status > span:not(.rule):not(.grow) {
    padding: 0 5px 0 10px;
  }

  .status > .column {
    margin-right: 5px;
  }

  .status .rule {
    height: 14px;
  }

  .review {
    gap: 4px;
    padding: 0 5px 0 4px;
  }

  .review .caret {
    margin-left: 0;
  }

  .status-views {
    display: flex;
    align-items: center;
    gap: 2px;
  }

  .status-views .rule {
    margin: 0 8px;
  }

  .status-views button {
    justify-content: center;
    width: 24px;
    height: 24px;
  }

  .status-views .selected {
    border-radius: 2px;
    background: #d9dee5;
  }

  .percent {
    margin-left: 3px;
    margin-right: 12px;
  }

  .slider {
    appearance: none;
    width: 140px;
    height: 14px;
    margin: 0 10px 0 12px;
    background: linear-gradient(90deg, #4a5878 33%, #d5d8dd 33%) center / 100% 1px no-repeat;
  }

  .slider::-webkit-slider-thumb {
    appearance: none;
    box-sizing: border-box;
    width: 12px;
    height: 12px;
    border: 1px solid #242c3f;
    border-radius: 50%;
    background: #f0f0f0;
  }

  .expand {
    margin-left: 13px;
  }

  /* memory notice */
  .toast {
    position: absolute;
    right: 6px;
    bottom: 93px;
    z-index: 3;
    box-sizing: border-box;
    width: 269px;
    padding: 9px 9px 11px 16px;
    background: #1b1f29;
    color: #fff;
    box-shadow: 0 0 5px rgba(0, 0, 0, 0.5);
  }

  .shield {
    position: absolute;
    top: -11px;
    left: 16px;
  }

  .dismiss {
    position: absolute;
    top: 7px;
    right: 7px;
    color: #868b96;
  }

  .headline {
    margin-left: 57px;
    font-size: 13px;
    line-height: 20px;
  }

  .headline b {
    font-weight: normal;
    color: #fbd81c;
  }

  .toast-row {
    display: flex;
    align-items: center;
    justify-content: space-between;
    margin-top: 14px;
    color: #747985;
  }

  .toast-row button {
    justify-content: center;
    width: 72px;
    height: 21px;
    background: #00c07b;
    color: #fff;
  }

  .watermark {
    position: absolute;
    right: 8px;
    bottom: 8px;
    z-index: 4;
    display: flex;
    align-items: center;
    opacity: 0.85;
    pointer-events: none;
  }

  .watermark div {
    display: flex;
    flex-direction: column;
  }

  .watermark strong {
    font-size: 21px;
    line-height: 24px;
    color: #5b98d8;
  }

  .watermark span {
    font: 18px/20px 'Liberation Sans', sans-serif;
    color: #57c177;
    -webkit-text-stroke: 1px #57c177;
  }
</style>
